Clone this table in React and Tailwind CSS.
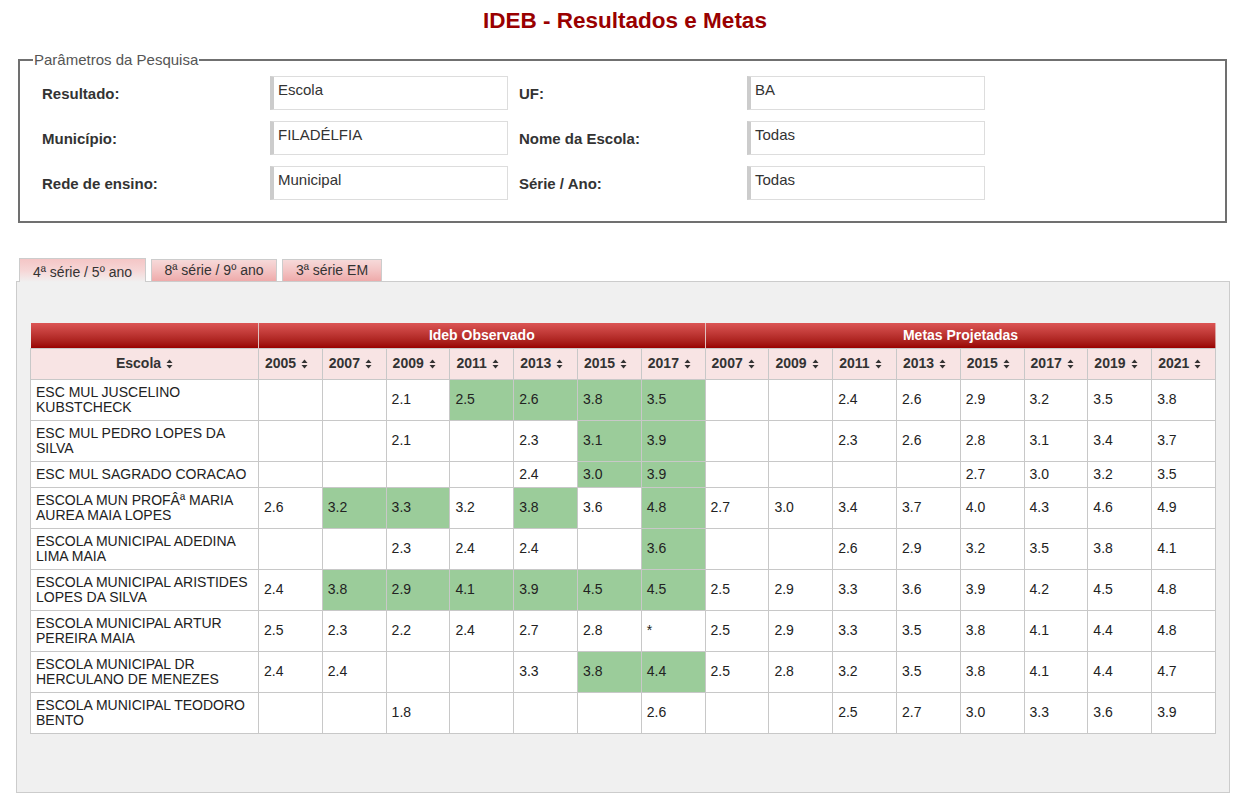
const FONT = { fontFamily: '"Liberation Sans", Arial, sans-serif' };

const obsYears = ['2005', '2007', '2009', '2011', '2013', '2015', '2017'];
const metaYears = ['2007', '2009', '2011', '2013', '2015', '2017', '2019', '2021'];

// obs values: trailing "g" marks a green cell (meta atingida)
const rows = [
  ['ESC MUL JUSCELINO KUBSTCHECK', ['', '', '2.1', '2.5g', '2.6g', '3.8g', '3.5g'], ['', '', '2.4', '2.6', '2.9', '3.2', '3.5', '3.8']],
  ['ESC MUL PEDRO LOPES DA SILVA', ['', '', '2.1', '', '2.3', '3.1g', '3.9g'], ['', '', '2.3', '2.6', '2.8', '3.1', '3.4', '3.7']],
  ['ESC MUL SAGRADO CORACAO', ['', '', '', '', '2.4', '3.0g', '3.9g'], ['', '', '', '', '2.7', '3.0', '3.2', '3.5']],
  ['ESCOLA MUN PROFÂª MARIA AUREA MAIA LOPES', ['2.6', '3.2g', '3.3g', '3.2', '3.8g', '3.6', '4.8g'], ['2.7', '3.0', '3.4', '3.7', '4.0', '4.3', '4.6', '4.9']],
  ['ESCOLA MUNICIPAL ADEDINA LIMA MAIA', ['', '', '2.3', '2.4', '2.4', '', '3.6g'], ['', '', '2.6', '2.9', '3.2', '3.5', '3.8', '4.1']],
  ['ESCOLA MUNICIPAL ARISTIDES LOPES DA SILVA', ['2.4', '3.8g', '2.9g', '4.1g', '3.9g', '4.5g', '4.5g'], ['2.5', '2.9', '3.3', '3.6', '3.9', '4.2', '4.5', '4.8']],
  ['ESCOLA MUNICIPAL ARTUR PEREIRA MAIA', ['2.5', '2.3', '2.2', '2.4', '2.7', '2.8', '*'], ['2.5', '2.9', '3.3', '3.5', '3.8', '4.1', '4.4', '4.8']],
  ['ESCOLA MUNICIPAL DR HERCULANO DE MENEZES', ['2.4', '2.4', '', '', '3.3', '3.8g', '4.4g'], ['2.5', '2.8', '3.2', '3.5', '3.8', '4.1', '4.4', '4.7']],
  ['ESCOLA MUNICIPAL TEODORO BENTO', ['', '', '1.8', '', '', '', '2.6'], ['', '', '2.5', '2.7', '3.0', '3.3', '3.6', '3.9']],
];

function SortIcon() {
  return (
    <svg width="7" height="10" viewBox="0 0 7 10" className="inline-block ml-[5px] align-[-1px]">
      <path d="M3.5 0.5 L6.5 4 L0.5 4 Z" fill="#333" />
      <path d="M3.5 9.5 L6.5 6 L0.5 6 Z" fill="#333" />
    </svg>
  );
}

function Field({ label, value, first }) {
  return (
    <>
      <div className={`font-bold text-[15px] text-[#333] flex items-center pt-[2px] ${first ? 'pl-[22px]' : ''}`}>{label}</div>
      <div className="h-[34px] bg-white border border-[#ddd] border-l-[4px] border-l-[#ccc] px-[4px] pt-[4px] text-[15px] leading-[17px] text-[#333]">
        {value}
      </div>
    </>
  );
}

function Tab({ label, active }) {
  if (active) {
    return (
      <div className="h-[24px] w-[127px] -mb-px border border-[#ccc] border-b-0 bg-gradient-to-b from-[#f4c6c6] via-[#f6d6d6] to-[#f0f0f0] flex items-center justify-center pt-[3px] text-[14px] text-[#333]">
        {label}
      </div>
    );
  }
  return (
    <div className="h-[22px] border border-[#ccc] border-b-0 bg-gradient-to-b from-[#f6d9d9] via-[#f3c4c4] to-[#eeaaaa] flex items-center justify-center text-[14px] text-[#333]">
      {label}
    </div>
  );
}

export default function App() {
  return (
    <div style={FONT} className="w-[1250px] h-[796px] bg-white overflow-hidden text-[#222]">
      <h1 className="text-center text-[22.5px] font-bold text-[#990000] pt-[7px] leading-[28px]">
        IDEB - Resultados e Metas
      </h1>

      <fieldset className="mx-[18px] w-[1209px] mt-[16px] border-2 border-[#707070] pb-[21px] px-0 pt-[8px]">
        <legend className="ml-[13px] px-[1px] text-[15px] text-[#555] leading-[17px]">Parâmetros da Pesquisa</legend>
        <div className="grid grid-cols-[239px_238px_217px_238px] gap-x-[11px] gap-y-[11px]">
          <Field label="Resultado:" value="Escola" first />
          <Field label="UF:" value="BA" />
          <Field label="Município:" value="FILADÉLFIA" first />
          <Field label="Nome da Escola:" value="Todas" />
          <Field label="Rede de ensino:" value="Municipal" first />
          <Field label="Série / Ano:" value="Todas" />
        </div>
      </fieldset>

      <div className="mx-[16px] mt-[35px]">
        <div className="flex items-end gap-[5px] pl-[3px]">
          <Tab label="4ª série / 5º ano" active />
          <div className="w-[126px]"><Tab label="8ª série / 9º ano" /></div>
          <div className="w-[100px]"><Tab label="3ª série EM" /></div>
        </div>
        <div className="h-[512px] w-[1214px] bg-[#f0f0f0] border border-[#ccc] pt-[41px] px-[13px]">
          <table className="table-fixed border-collapse w-[1186px] text-[14px] leading-[15px]">
            <colgroup>
              <col className="w-[228px]" />
              {obsYears.concat(metaYears).map((y, i) => (
                <col key={i} />
              ))}
            </colgroup>
            <thead>
              <tr className="bg-gradient-to-b from-[#dc5454] to-[#990000] text-white font-bold">
                <th className="h-[25px] border-r border-[#e0c0c0]"></th>
                <th colSpan={7} className="border-r border-[#e0c0c0] text-center">Ideb Observado</th>
                <th colSpan={8} className="text-center">Metas Projetadas</th>
              </tr>
              <tr className="bg-[#f8e4e4] text-[#333] font-bold">
                <th className="h-[31px] border border-[#c8c8c8] text-center">
                  Escola<SortIcon />
                </th>
                {obsYears.concat(metaYears).map((y, i) => (
                  <th key={i} className="border border-[#c8c8c8] text-left pl-[6px] whitespace-nowrap">
                    {y}<SortIcon />
                  </th>
                ))}
              </tr>
            </thead>
            <tbody>
              {rows.map(([name, obs, meta], r) => (
                <tr key={r} className="bg-white">
                  <td className="border border-[#c8c8c8] px-[5px] py-[5px] align-middle">{name}</td>
                  {obs.map((v, i) => {
                    const green = v.endsWith('g');
                    return (
                      <td
                        key={i}
                        className={`border border-[#c8c8c8] px-[5px] py-[5px] align-middle ${green ? 'bg-[#9bcc9a]' : ''}`}
                      >
                        {green ? v.slice(0, -1) : v}
                      </td>
                    );
                  })}
                  {meta.map((v, i) => (
                    <td key={i} className="border border-[#c8c8c8] px-[5px] py-[5px] align-middle">
                      {v}
                    </td>
                  ))}
                </tr>
              ))}
            </tbody>
          </table>
        </div>
      </div>
    </div>
  );
}
